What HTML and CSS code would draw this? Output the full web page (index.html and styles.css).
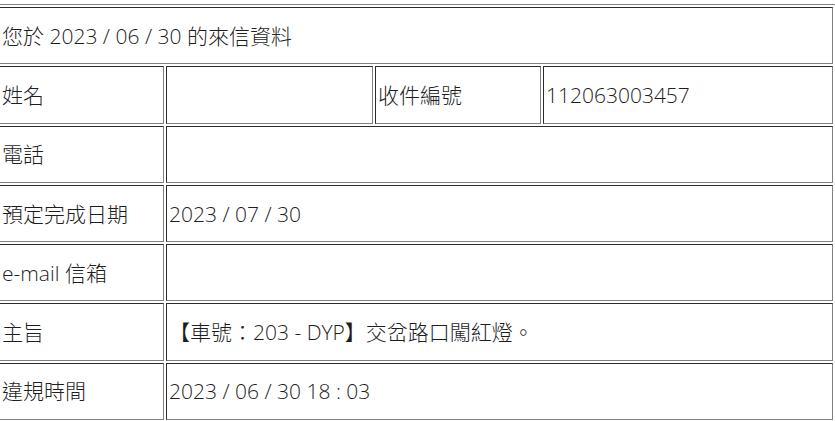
FILE: index.html
```html
<!DOCTYPE html>
<html lang="zh-Hant-TW">
<head>
<meta charset="utf-8">
<title>來信資料</title>
<link rel="stylesheet" href="styles.css">
</head>
<body>
<div class="page">
  <table class="letter">
    <colgroup>
      <col class="c1">
      <col class="c2">
      <col class="c3">
      <col class="c4">
    </colgroup>
    <tbody>
      <tr><td colspan="4">您於 2023 / 06 / 30 的來信資料</td></tr>
      <tr><td>姓名</td><td></td><td>收件編號</td><td>112063003457</td></tr>
      <tr><td>電話</td><td colspan="3"></td></tr>
      <tr><td>預定完成日期</td><td colspan="3">2023 / 07 / 30</td></tr>
      <tr><td>e-mail 信箱</td><td colspan="3"></td></tr>
      <tr><td>主旨</td><td colspan="3">【車號：203 - DYP】交岔路口闖紅燈。</td></tr>
      <tr><td>違規時間</td><td colspan="3">2023 / 06 / 30 18 : 03</td></tr>
    </tbody>
  </table>
</div>
</body>
</html>
```

FILE: styles.css
```css
html, body {
  margin: 0;
  padding: 0;
  background: #ffffff;
  overflow: hidden;
}

.page {
  padding-top: 4px;
  margin-left: -4px;
}

.letter {
  width: 839px;
  table-layout: fixed;
  border-collapse: separate;
  border-spacing: 2px;
  border: 1px outset #808080;
  font-family: "Open Sans", "Noto Sans CJK TC", sans-serif;
  font-size: 21px;
  font-weight: 300;
  color: #1e1e1e;
}

.c1 { width: 165px; }
.c2 { width: 207px; }
.c3 { width: 166px; }
.c4 { width: 290px; }

.letter td {
  box-sizing: border-box;
  height: 57.3px;
  padding: 0 2px;
  border: 1px inset #808080;
  vertical-align: middle;
  white-space: nowrap;
  line-height: 28px;
}
```
